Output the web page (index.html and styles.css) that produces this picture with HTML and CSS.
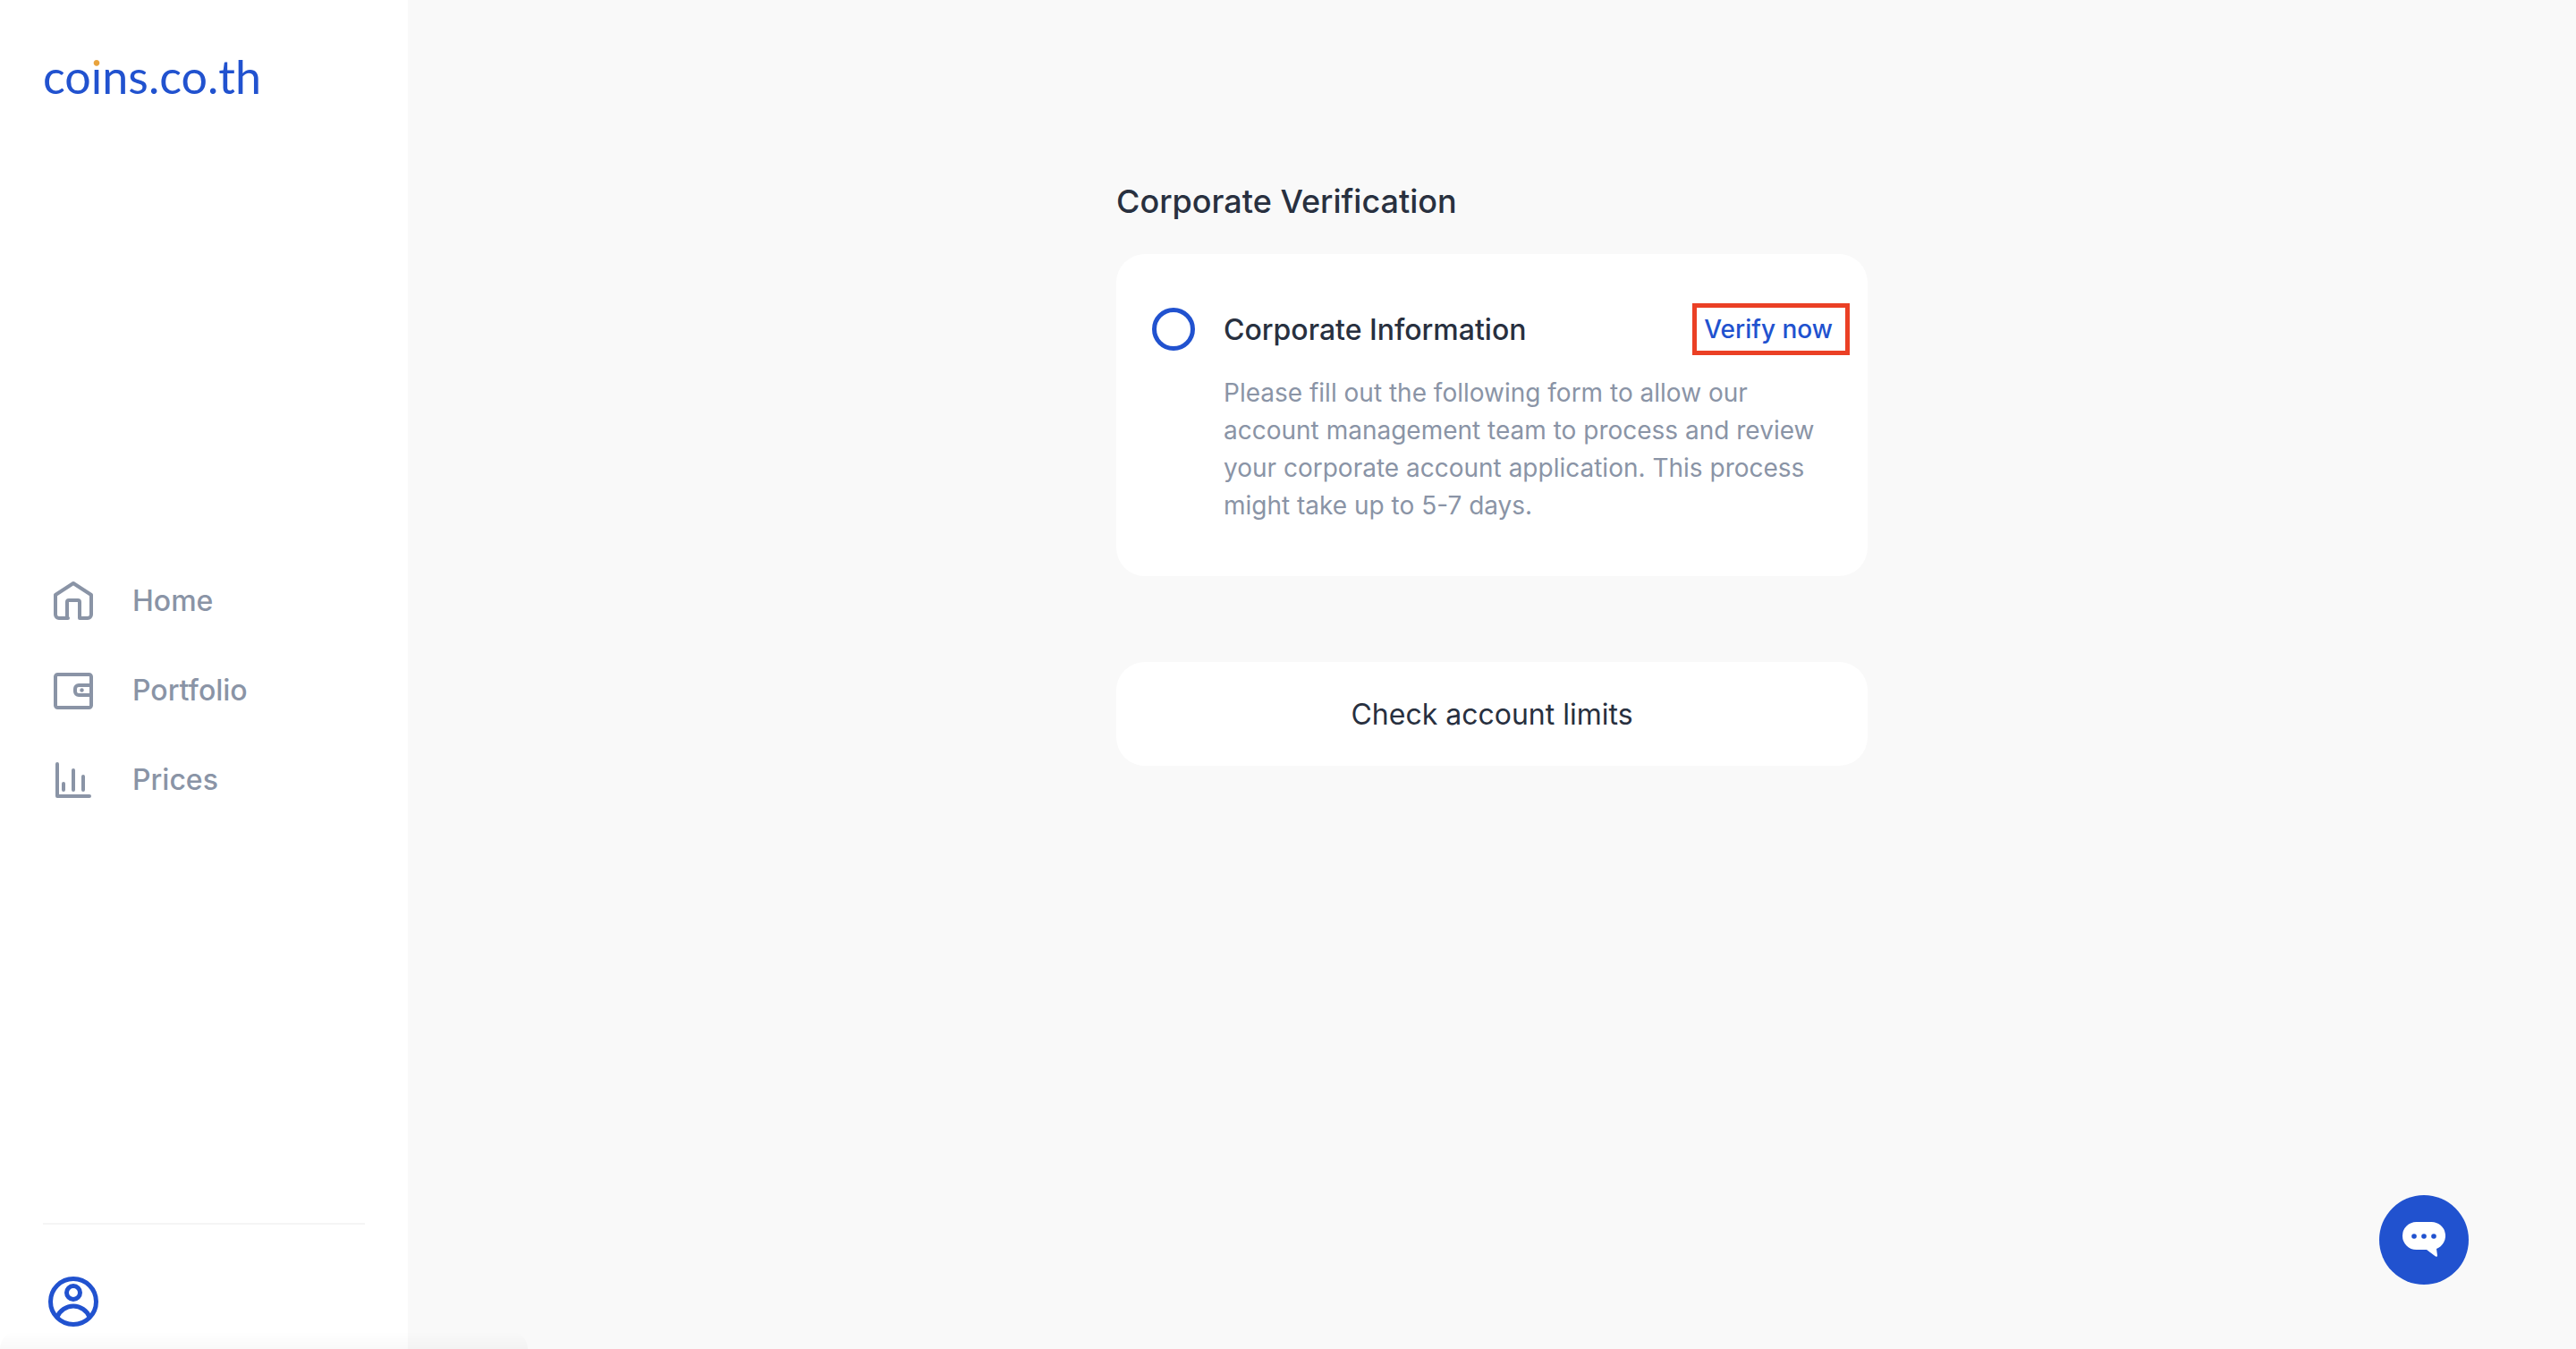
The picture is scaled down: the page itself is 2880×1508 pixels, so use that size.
FILE: index.html
```html
<!DOCTYPE html>
<html lang="en">
  <head>
    <meta charset="UTF-8" />
    <meta name="viewport" content="width=device-width, initial-scale=1.0" />
    <title>Corporate Verification | coins.co.th</title>
    <link rel="stylesheet" href="styles.css">
  </head>
  <body>
    <aside class="sidebar">
      <a class="logo" href="#">co<span class="logo-i">i</span>ns.co.th</a>

      <nav class="nav">
        <a class="nav-link" href="#">
          <svg class="icon" viewBox="0 0 48 48">
            <path d="M18 43H8a4 4 0 0 1-4-4V17L24 4l20 13v22a4 4 0 0 1-4 4h-9V25a2 2 0 0 0-2-2H19a2 2 0 0 0-2 2v18" />
          </svg>
          Home
        </a>
        <a class="nav-link" href="#">
          <svg class="icon" viewBox="0 0 48 48">
            <rect x="4" y="6" width="40" height="37" rx="2.5" />
            <path d="M44 18H30a4 4 0 0 0-4 4v3a4 4 0 0 0 4 4h14" />
            <circle class="icon-dot" cx="33.5" cy="23.5" r="2.2" />
          </svg>
          Portfolio
        </a>
        <a class="nav-link" href="#">
          <svg class="icon" viewBox="0 0 48 48">
            <path d="M6 6v36h36M13 28v7M24 13v22M35 20v15" />
          </svg>
          Prices
        </a>
      </nav>

      <div class="sidebar-footer">
        <button type="button" class="profile-btn" aria-label="Profile">
          <svg class="profile-icon" viewBox="0 0 56 56">
            <circle cx="28" cy="28" r="25.5" />
            <circle cx="28" cy="18" r="7.5" />
            <path d="M10 45c3-7 10-12 18-12s15 5 18 12" />
          </svg>
        </button>
      </div>
    </aside>

    <main class="main">
      <div class="container">
        <h1>Corporate Verification</h1>

        <section class="card">
          <span class="step-circle"></span>
          <div class="card-body">
            <div class="card-header">
              <h2>Corporate Information</h2>
              <a class="verify-link" href="#">Verify now</a>
            </div>
            <p>
              Please fill out the following form to allow our account management
              team to process and review your corporate account application. This
              process might take up to 5-7 days.
            </p>
          </div>
        </section>

        <button type="button" class="btn-limits">Check account limits</button>
      </div>
    </main>

    <button type="button" class="chat-btn" aria-label="Chat">
      <svg class="chat-icon" viewBox="0 0 48 40">
        <path class="bubble" d="M15.5 0h17a15.5 15.5 0 0 1 5.5 30l1 7.5q0 2-2 1L27 31H15.5a15.5 15.5 0 0 1 0-31z" />
        <circle cx="13" cy="16" r="2.8" />
        <circle cx="24" cy="16" r="2.8" />
        <circle cx="35" cy="16" r="2.8" />
      </svg>
    </button>

    <div class="bottom-shadow"></div>
  </body>
</html>
```
FILE: styles.css
```css
:root {
  --primary-color: #2152cf;
  --text-color: #28303f;
  --muted-color: #8a94a6;
  --accent-color: #e8a33d;
  --highlight-color: #eb4025;
  --bg-color: #f9f9f9;
  --card-bg: #ffffff;
}

* {
  box-sizing: border-box;
  margin: 0;
  padding: 0;
}

body {
  display: flex;
  min-height: 100vh;
  font-family: Inter, "Liberation Sans", sans-serif;
  color: var(--text-color);
  background-color: var(--bg-color);
}

a {
  text-decoration: none;
}

button {
  border: none;
  font-family: inherit;
  cursor: pointer;
}

/* Sidebar */
.sidebar {
  position: sticky;
  top: 0;
  display: flex;
  flex-direction: column;
  flex-shrink: 0;
  width: 456px;
  height: 100vh;
  padding: 0 48px;
  background-color: var(--card-bg);
}

.logo {
  height: 176px;
  padding-top: 53px;
  font-family: Lato, sans-serif;
  font-size: 52px;
  line-height: 64px;
  color: var(--primary-color);
}

/* orange dot over a blue stem */
.logo-i {
  display: inline-block;
  color: transparent;
  background: linear-gradient(var(--accent-color) 22px, var(--primary-color) 22px);
  -webkit-background-clip: text;
  background-clip: text;
}

.nav {
  display: flex;
  flex: 1;
  flex-direction: column;
  justify-content: center;
  gap: 52px;
}

.nav-link {
  display: flex;
  align-items: center;
  gap: 42px;
  padding-left: 10px;
  font-size: 32px;
  font-weight: 500;
  line-height: 48px;
  color: var(--muted-color);
}

.icon {
  width: 48px;
  height: 48px;
  fill: none;
  stroke: currentColor;
  stroke-width: 4;
  stroke-linecap: round;
  stroke-linejoin: round;
}

.icon-dot {
  fill: currentColor;
  stroke: none;
}

.sidebar-footer {
  height: 141px;
  padding: 58px 6px 0;
  border-top: 2px solid #f5f5f5;
}

.profile-btn {
  display: block;
  background: none;
}

.profile-icon {
  display: block;
  width: 56px;
  height: 56px;
  fill: none;
  stroke: var(--primary-color);
  stroke-width: 5;
}

/* Content */
.main {
  flex: 1;
  padding: 197px 40px 40px;
}

.container {
  max-width: 840px;
  margin: 0 auto;
}

h1 {
  margin-bottom: 31px;
  font-size: 36px;
  font-weight: 500;
  line-height: 56px;
}

.card {
  display: flex;
  gap: 32px;
  margin-bottom: 96px;
  padding: 60px 40px 58px;
  border-radius: 32px;
  background-color: var(--card-bg);
}

.step-circle {
  flex-shrink: 0;
  width: 48px;
  height: 48px;
  border: 5px solid var(--primary-color);
  border-radius: 50%;
}

.card-body {
  flex: 1;
}

.card-header {
  display: flex;
  align-items: center;
  justify-content: space-between;
  height: 48px;
  margin-bottom: 26px;
}

h2 {
  font-size: 32px;
  font-weight: 500;
}

.verify-link {
  margin-right: -20px;
  padding: 6px 14px 6px 8px;
  border: 5px solid var(--highlight-color);
  font-size: 28px;
  font-weight: 500;
  line-height: 36px;
  color: var(--primary-color);
}

.card p {
  font-size: 28px;
  line-height: 42px;
  color: var(--muted-color);
}

.btn-limits {
  width: 100%;
  height: 116px;
  border-radius: 32px;
  font-size: 32px;
  color: var(--text-color);
  background-color: var(--card-bg);
}

/* Chat widget */
.chat-btn {
  position: fixed;
  right: 120px;
  bottom: 72px;
  display: flex;
  justify-content: center;
  width: 100px;
  height: 100px;
  padding-top: 30px;
  border-radius: 50%;
  background-color: var(--primary-color);
}

.chat-icon {
  width: 48px;
  height: 40px;
  fill: var(--primary-color);
}

.bubble {
  fill: #ffffff;
}

/* faint shade along the bottom left edge */
.bottom-shadow {
  position: fixed;
  bottom: 0;
  left: 0;
  width: 590px;
  height: 20px;
  border-radius: 20px 20px 0 0;
  background: linear-gradient(rgba(0, 0, 0, 0), rgba(0, 0, 0, 0.025));
  pointer-events: none;
}
```
